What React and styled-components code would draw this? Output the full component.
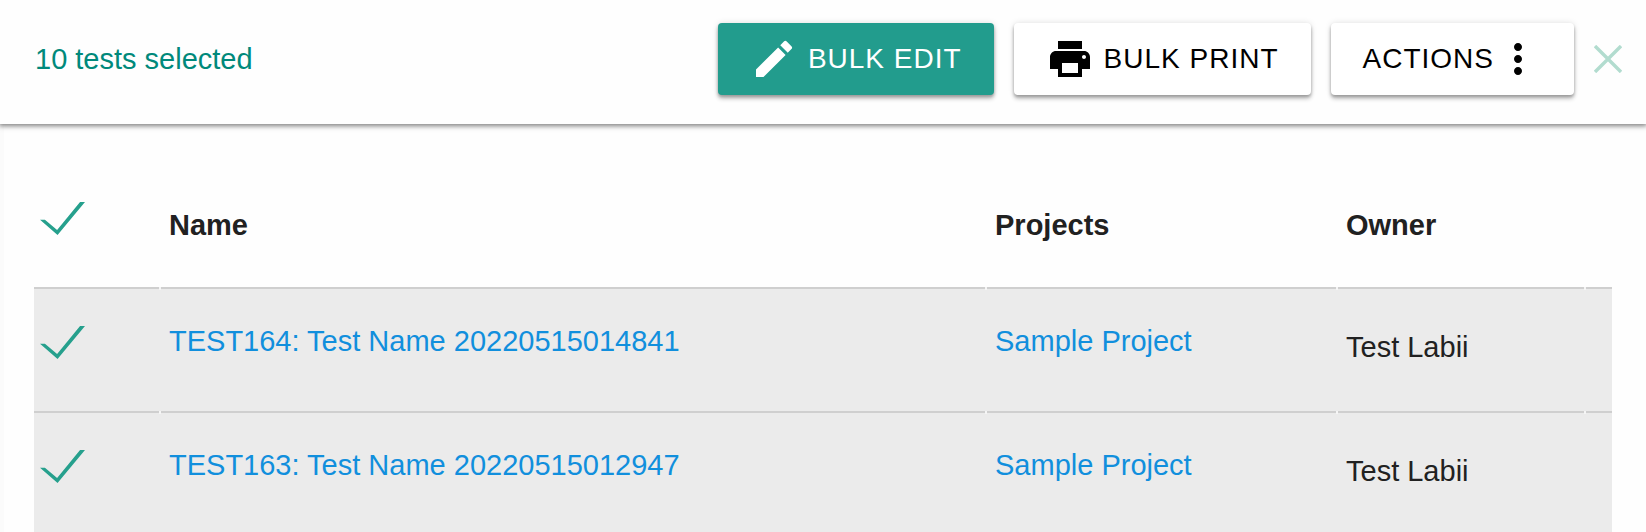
import React, { useState } from "react";
import styled, { createGlobalStyle } from "styled-components";
import { MdEdit, MdPrint, MdMoreVert } from "react-icons/md";

const GlobalStyle = createGlobalStyle`
	* {
		box-sizing: border-box;
	}
	body {
		margin: 0;
		background-color: #fefefe;
		color: #212121;
		font-family: "Liberation Sans", Arial, sans-serif;
		font-size: 29px;
		line-height: 44px;
	}
`;

const Page = styled.div`
	display: flex;
	flex-direction: column;
	height: 100vh;
	overflow: hidden;
`;

const Toolbar = styled.header`
	position: relative;
	z-index: 1;
	display: flex;
	align-items: center;
	justify-content: space-between;
	padding: 23px 24px 29px 35px;
	background-color: #fefefe;
	box-shadow: 0 1px 5px 1px rgba(0, 0, 0, 0.5);
`;

const Selected = styled.span`
	color: #00897b;
`;

const Tools = styled.div`
	display: flex;
	align-items: center;
	gap: 20px;
`;

const ToolButton = styled.button`
	display: flex;
	align-items: center;
	gap: ${({ $gap }) => $gap || "0"};
	height: 72px;
	padding: 0 32px;
	border: 0;
	border-radius: 4px;
	background-color: ${({ $primary }) => ($primary ? "#229c8d" : "#fff")};
	color: ${({ $primary }) => ($primary ? "#fff" : "#000")};
	font-family: inherit;
	font-size: 28px;
	letter-spacing: 1px;
	white-space: nowrap;
	box-shadow: 0 4px 4px 0 rgba(0, 0, 0, 0.2), 0 2px 3px 0 rgba(0, 0, 0, 0.2),
		0 0 6px 0 rgba(0, 0, 0, 0.12);
	cursor: pointer;
`;

const CloseButton = styled.button`
	display: flex;
	padding: 0;
	border: 0;
	background: none;
	cursor: pointer;
`;

const Content = styled.main`
	flex: 1;
	padding: 39px 34px 0;
	box-shadow: inset 4px 0 #fbfbfb;
`;

const Table = styled.table`
	width: 100%;
	table-layout: fixed;
	border-collapse: separate;
	border-spacing: 0;
`;

const Col = styled.col`
	width: ${({ $width }) => $width};
`;

const HeadCell = styled.th`
	height: 124px;
	padding: ${({ $check }) => ($check ? "39px 10px 0" : "0 10px")};
	vertical-align: ${({ $check }) => ($check ? "top" : "middle")};
	text-align: left;
	font-weight: bold;
`;

const Row = styled.tr`
	height: 124px;
	background-color: #ebebeb;
`;

/* the top rule breaks for a moment where two columns meet */
const Cell = styled.td`
	padding: ${({ $top }) => $top} 10px 0;
	vertical-align: top;
	background-image: linear-gradient(#f5f5f5, #f5f5f5),
		linear-gradient(#cfcfcf, #cfcfcf);
	background-position: left top;
	background-size: 2px 3px, 100% 2px;
	background-repeat: no-repeat;
	&:first-child {
		background-size: 0 0, 100% 2px;
	}
`;

const ItemLink = styled.a`
	color: #118fdd;
	text-decoration: none;
`;

const Check = styled.input`
	appearance: none;
	display: block;
	width: 45px;
	height: 33px;
	margin: 0 0 0 -4px;
	background-color: #26a08d;
	cursor: pointer;
	clip-path: polygon(0 54%, 11% 54%, 38% 85%, 89% 0, 100% 0, 39% 100%);
	&:not(:checked) {
		opacity: 0.2;
	}
`;

const tests = [
	{
		id: 164,
		name: "TEST164: Test Name 20220515014841",
		project: "Sample Project",
		owner: "Test Labii"
	},
	{
		id: 163,
		name: "TEST163: Test Name 20220515012947",
		project: "Sample Project",
		owner: "Test Labii"
	}
];

function CloseIcon() {
	return (
		<svg width="28" height="28" viewBox="0 0 28 28" aria-hidden="true">
			<path d="M1 1L27 27M27 1L1 27" stroke="#b2dccf" strokeWidth="3.4" />
		</svg>
	);
}

function App() {
	const [checked, setChecked] = useState({ 164: true, 163: true });
	const all = tests.every(({ id }) => checked[id]);
	const toggle = id => setChecked({ ...checked, [id]: !checked[id] });
	const toggleAll = () => setChecked({ 164: !all, 163: !all });

	return (
		<Page>
			<GlobalStyle />
			<Toolbar>
				<Selected>10 tests selected</Selected>
				<Tools>
					<ToolButton $primary $gap="10px">
						<MdEdit size={48} />
						BULK EDIT
					</ToolButton>
					<ToolButton $gap="10px">
						<MdPrint size={48} />
						BULK PRINT
					</ToolButton>
					<ToolButton>
						ACTIONS
						<MdMoreVert size={48} />
					</ToolButton>
					<CloseButton aria-label="Clear selection">
						<CloseIcon />
					</CloseButton>
				</Tools>
			</Toolbar>
			<Content>
				<Table>
					<colgroup>
						<Col $width="125px" />
						<Col />
						<Col $width="351px" />
						<Col $width="248px" />
						<Col $width="28px" />
					</colgroup>
					<thead>
						<tr>
							<HeadCell $check>
								<Check
									type="checkbox"
									aria-label="Select all tests"
									checked={all}
									onChange={toggleAll}
								/>
							</HeadCell>
							<HeadCell>Name</HeadCell>
							<HeadCell>Projects</HeadCell>
							<HeadCell>Owner</HeadCell>
							<HeadCell />
						</tr>
					</thead>
					<tbody>
						{tests.map(({ id, name, project, owner }) => (
							<Row key={id}>
								<Cell $top="39px">
									<Check
										type="checkbox"
										aria-label={`Select TEST${id}`}
										checked={checked[id]}
										onChange={() => toggle(id)}
									/>
								</Cell>
								<Cell $top="32px">
									<ItemLink href="#">{name}</ItemLink>
								</Cell>
								<Cell $top="32px">
									<ItemLink href="#">{project}</ItemLink>
								</Cell>
								<Cell $top="38px">{owner}</Cell>
								<Cell $top="0" />
							</Row>
						))}
					</tbody>
				</Table>
			</Content>
		</Page>
	);
}

export default App;
